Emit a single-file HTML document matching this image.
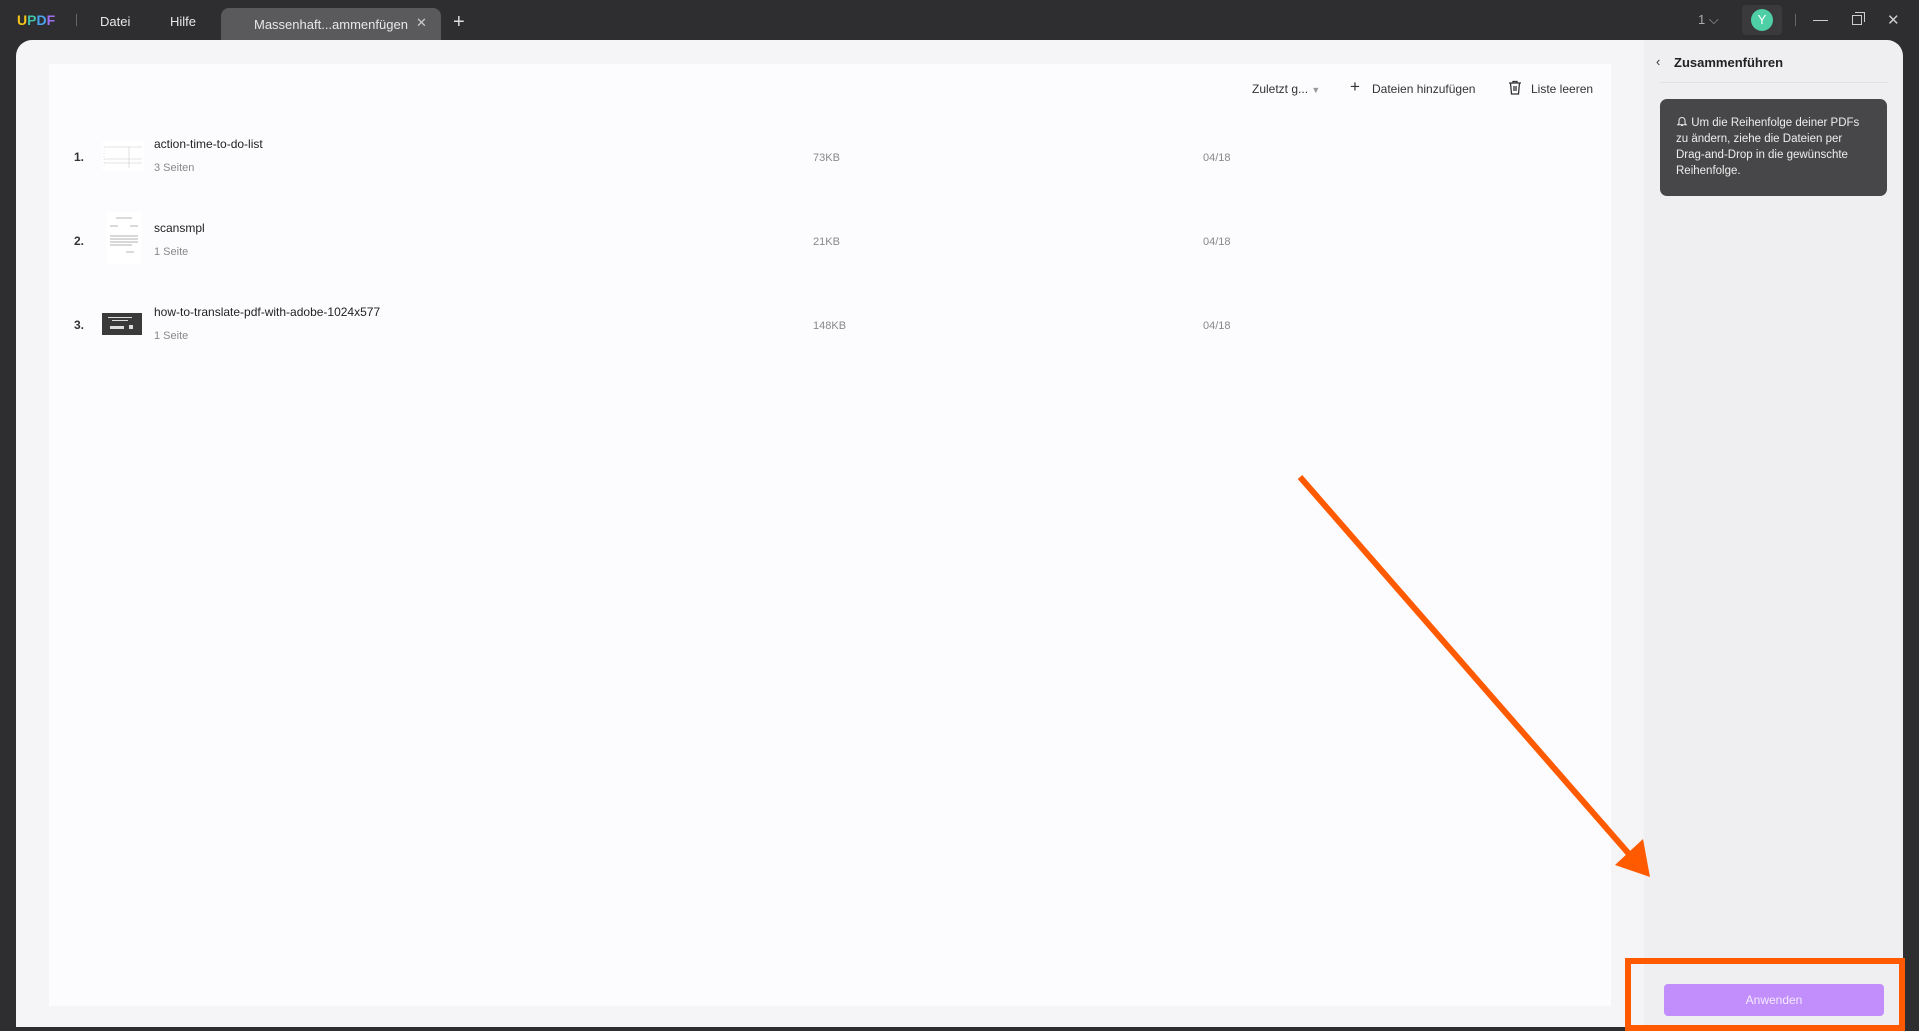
<!DOCTYPE html>
<html><head><meta charset="utf-8"><style>
*{margin:0;padding:0;box-sizing:border-box}
body{width:1919px;height:1031px;background:#2e2e30;font-family:"Liberation Sans",sans-serif;position:relative;overflow:hidden}
.abs{position:absolute}
.top{color:#e8e8e8;font-size:13px}
.main{left:16px;top:40px;width:1632px;height:987px;background:#f5f5f7;border-radius:16px 0 0 0}
.card{left:49px;top:64px;width:1562px;height:942px;background:#fcfcfe}
.panel{left:1644px;top:40px;width:259px;height:987px;background:#efeef0;border-radius:0 16px 0 0}
.t{font-size:12px;color:#222}
.s{font-size:11px;color:#888}
.n{font-size:12px;color:#333;font-weight:bold}
</style></head><body>
<div class="abs" style="left:17px;top:12px;font-weight:bold;font-size:14px"><span style="color:#f5c518">U</span><span style="color:#3ec1a4">P</span><span style="color:#4aa3f0">D</span><span style="color:#a070f0">F</span></div>
<div class="abs" style="left:76px;top:14px;width:1px;height:12px;background:#666"></div>
<div class="abs top" style="left:100px;top:14px">Datei</div>
<div class="abs top" style="left:170px;top:14px">Hilfe</div>
<div class="abs" style="left:221px;top:8px;width:220px;height:32px;background:#5a5a5c;border-radius:8px 8px 0 0"></div>
<div class="abs top" style="left:254px;top:17px">Massenhaft...ammenfügen</div>
<div class="abs top" style="left:416px;top:15px;color:#ccc">✕</div>
<div class="abs" style="left:453px;top:11px;color:#ddd;font-size:20px">+</div>
<div class="abs top" style="left:1698px;top:12px;color:#aaa">1 ⌵</div>
<div class="abs" style="left:1742px;top:5px;width:40px;height:30px;background:#3a3a3c;border-radius:4px"></div>
<div class="abs" style="left:1751px;top:9px;width:22px;height:22px;border-radius:50%;background:#4ecfa6;color:#fff;font-size:13px;text-align:center;line-height:22px">Y</div>
<div class="abs" style="left:1795px;top:14px;width:1px;height:12px;background:#666"></div>
<div class="abs" style="left:1813px;top:20px;width:15px;height:1px;background:#ccc"></div>
<div class="abs" style="left:1852px;top:15px;width:10px;height:10px;border:1px solid #ccc"></div>
<div class="abs" style="left:1855px;top:12px;width:10px;height:10px;border-top:1px solid #ccc;border-right:1px solid #ccc"></div>
<div class="abs top" style="left:1887px;top:11px;color:#ccc;font-size:15px">✕</div>

<div class="abs main"></div>
<div class="abs card"></div>
<div class="abs panel"></div>

<div class="abs" style="left:1252px;top:82px;font-size:12px;color:#333">Zuletzt g... <span style="color:#999;font-size:9px">▼</span></div>
<div class="abs" style="left:1350px;top:77px;font-size:17px;color:#333">+</div>
<div class="abs" style="left:1372px;top:82px;font-size:12px;color:#333">Dateien hinzufügen</div>
<svg class="abs" style="left:1507px;top:80px" width="16" height="16" viewBox="0 0 16 16"><path d="M2 3h12M6 3V1.5h4V3M3.5 3l1 11h7l1-11M7 6v5M9 6v5" fill="none" stroke="#333" stroke-width="1.3"/></svg>
<div class="abs" style="left:1531px;top:82px;font-size:12px;color:#333">Liste leeren</div>

<div class="abs n" style="left:74px;top:150px">1.</div>
<svg class="abs" style="left:102px;top:142px" width="42" height="28"><rect width="42" height="28" fill="#fff"/><g stroke="#ccc" stroke-width="0.6"><line x1="2" y1="5" x2="40" y2="5"/><line x1="2" y1="17" x2="40" y2="17"/><line x1="2" y1="21" x2="40" y2="21"/><line x1="27" y1="5" x2="27" y2="26"/><line x1="2" y1="5" x2="2" y2="26" stroke-dasharray="1 2"/></g></svg>
<div class="abs t" style="left:154px;top:137px">action-time-to-do-list</div>
<div class="abs s" style="left:154px;top:162px">3 Seiten</div>
<div class="abs s" style="left:813px;top:152px">73KB</div>
<div class="abs s" style="left:1203px;top:152px">04/18</div>

<div class="abs n" style="left:74px;top:234px">2.</div>
<svg class="abs" style="left:106px;top:212px" width="36" height="52"><rect width="36" height="52" fill="#fff"/><g stroke="#999" stroke-width="0.7"><line x1="10" y1="6" x2="26" y2="6"/><line x1="4" y1="14" x2="12" y2="14"/><line x1="24" y1="14" x2="32" y2="14"/><line x1="4" y1="24" x2="32" y2="24"/><line x1="4" y1="27" x2="32" y2="27"/><line x1="4" y1="30" x2="32" y2="30"/><line x1="4" y1="33" x2="26" y2="33"/><line x1="20" y1="40" x2="28" y2="40"/></g></svg>
<div class="abs t" style="left:154px;top:221px">scansmpl</div>
<div class="abs s" style="left:154px;top:246px">1 Seite</div>
<div class="abs s" style="left:813px;top:236px">21KB</div>
<div class="abs s" style="left:1203px;top:236px">04/18</div>

<div class="abs n" style="left:74px;top:318px">3.</div>
<svg class="abs" style="left:102px;top:313px" width="40" height="22"><rect width="40" height="22" fill="#3a3a3a"/><g fill="#ddd"><rect x="6" y="4" width="24" height="1"/><rect x="10" y="7" width="16" height="1"/><rect x="8" y="13" width="14" height="3"/><rect x="27" y="12" width="4" height="4"/></g></svg>
<div class="abs t" style="left:154px;top:305px">how-to-translate-pdf-with-adobe-1024x577</div>
<div class="abs s" style="left:154px;top:330px">1 Seite</div>
<div class="abs s" style="left:813px;top:320px">148KB</div>
<div class="abs s" style="left:1203px;top:320px">04/18</div>

<div class="abs" style="left:1656px;top:54px;font-size:13px;color:#333">‹</div>
<div class="abs" style="left:1674px;top:55px;font-size:13px;font-weight:bold;color:#222">Zusammenführen</div>
<div class="abs" style="left:1660px;top:82px;width:228px;height:1px;background:#e0e0e2"></div>
<div class="abs" style="left:1660px;top:99px;width:227px;height:97px;background:#474749;border-radius:7px;color:#eee;font-size:11.5px;line-height:16px;padding:16px 8px 0 16px;white-space:nowrap"><svg width="12" height="12" viewBox="0 0 12 12" style="vertical-align:-1px"><path d="M3 8.5V5.5a3 3 0 0 1 6 0v3l1.2 1.2H1.8zM5 10.5h2" fill="none" stroke="#eee" stroke-width="1"/></svg> Um die Reihenfolge deiner PDFs<br>zu ändern, ziehe die Dateien per<br>Drag-and-Drop in die gewünschte<br>Reihenfolge.</div>

<div class="abs" style="left:1664px;top:984px;width:220px;height:32px;background:#c18efc;border-radius:4px;color:#f4eaff;font-size:12px;text-align:center;line-height:32px">Anwenden</div>
<div class="abs" style="left:1625px;top:958px;width:280px;height:73px;border:6px solid #ff5a00"></div>

<svg class="abs" style="left:0;top:0" width="1919" height="1031"><line x1="1300" y1="477" x2="1636" y2="862" stroke="#ff5a00" stroke-width="6"/><polygon points="1650,877 1615,865 1643,839" fill="#ff5a00"/></svg>
</body></html>
